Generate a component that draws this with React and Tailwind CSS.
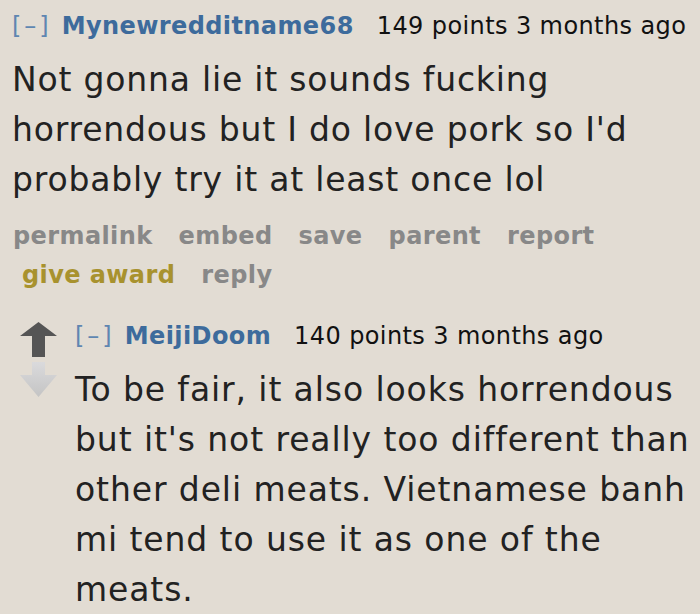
export default function App() {
  const font = { fontFamily: '"DejaVu Sans", Verdana, sans-serif' };
  return (
    <div className="w-[700px] h-[614px] overflow-hidden bg-[#e2dcd3] text-[#222]" style={font}>
      <div className="pl-[12px] pt-[8px]">
        <div className="flex items-baseline text-[24px] tracking-[0.4px] leading-[36px] whitespace-nowrap">
          <span className="text-[#5f86b1] tracking-[3px]">[–]</span>
          <span className="ml-[10px] font-bold text-[#3d6b9c]">Mynewredditname68</span>
          <span className="ml-[23px] text-[#111]">149 points 3 months ago</span>
        </div>
        <div className="mt-[11px] text-[33px] tracking-[0.8px] leading-[50px] whitespace-nowrap">
          <div>Not gonna lie it sounds fucking</div>
          <div>horrendous but I do love pork so I'd</div>
          <div>probably try it at least once lol</div>
        </div>
        <div className="mt-[12px] text-[24px] tracking-[0.4px] font-bold text-[#888] leading-[39px] whitespace-nowrap">
          <div className="flex gap-[26px] pl-[1px]">
            <span>permalink</span>
            <span>embed</span>
            <span>save</span>
            <span>parent</span>
            <span>report</span>
          </div>
          <div className="flex gap-[26px] pl-[10px]">
            <span className="text-[#a8922e]">give award</span>
            <span>reply</span>
          </div>
        </div>
      </div>
      <div className="flex mt-[23px] pl-[20px]">
        <div className="flex flex-col items-center w-[37px] pt-[4px]">
          <svg width="37" height="35" viewBox="0 0 37 35">
            <polygon points="18.5,0 37,14 25,14 25,35 12,35 12,14 0,14" fill="#555" />
          </svg>
          <svg width="37" height="35" viewBox="0 0 37 35" className="mt-[5px]">
            <defs>
              <linearGradient id="dg" x1="0" y1="0" x2="0" y2="1">
                <stop offset="0" stopColor="#dadadc" />
                <stop offset="1" stopColor="#c4c4c4" />
              </linearGradient>
            </defs>
            <polygon points="12,0 25,0 25,13 37,13 18.5,35 0,13 12,13" fill="url(#dg)" />
          </svg>
        </div>
        <div className="ml-[18px]">
          <div className="flex items-baseline text-[24px] tracking-[0.4px] leading-[36px] whitespace-nowrap">
            <span className="text-[#5f86b1] tracking-[3px]">[–]</span>
            <span className="ml-[10px] font-bold text-[#3d6b9c]">MeijiDoom</span>
            <span className="ml-[23px] text-[#111]">140 points 3 months ago</span>
          </div>
          <div className="mt-[11px] text-[33px] tracking-[0.9px] leading-[50px] whitespace-nowrap">
            <div>To be fair, it also looks horrendous</div>
            <div>but it's not really too different than</div>
            <div>other deli meats. Vietnamese banh</div>
            <div>mi tend to use it as one of the</div>
            <div>meats.</div>
          </div>
        </div>
      </div>
    </div>
  );
}
